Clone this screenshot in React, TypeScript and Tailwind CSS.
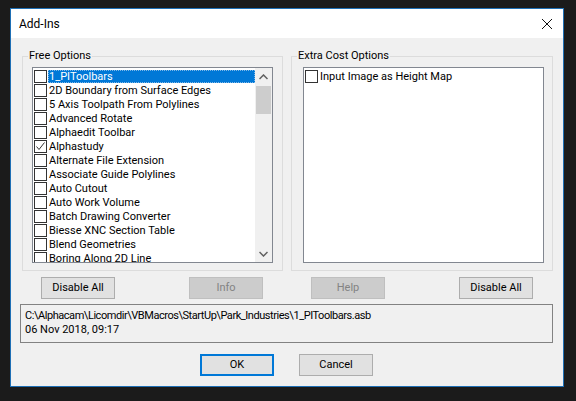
import React from "react";

const freeOptions = [
  "1_PIToolbars",
  "2D Boundary from Surface Edges",
  "5 Axis Toolpath From Polylines",
  "Advanced Rotate",
  "Alphaedit Toolbar",
  "Alphastudy",
  "Alternate File Extension",
  "Associate Guide Polylines",
  "Auto Cutout",
  "Auto Work Volume",
  "Batch Drawing Converter",
  "Biesse XNC Section Table",
  "Blend Geometries",
  "Boring Along 2D Line",
];

function CheckBox({ checked }: { checked?: boolean }) {
  return (
    <div className="w-[13px] h-[13px] shrink-0 border border-[#333333] bg-white flex items-center justify-center">
      {checked && (
        <svg width="11" height="11" viewBox="0 0 11 11">
          <path d="M1.5 5.5 L4 8.5 L9.5 1.5" fill="none" stroke="#333" strokeWidth="1" />
        </svg>
      )}
    </div>
  );
}

function Row({ label, checked, selected }: { label: string; checked?: boolean; selected?: boolean }) {
  return (
    <div className="h-[14px] flex items-center pl-[1px] whitespace-nowrap">
      <CheckBox checked={checked} />
      <span
        className={`ml-[1px] h-[13px] leading-[13px] pl-[1px] flex-1 ${
          selected ? "bg-[#0078d7] text-white outline outline-1 outline-dotted outline-[#7fb8e8] -outline-offset-1" : "text-black"
        }`}
      >
        {label}
      </span>
    </div>
  );
}

function GroupBox({ title, children }: { title: string; children: React.ReactNode }) {
  return (
    <div className="relative border border-[#dcdcdc] h-[215px] pt-[10px]">
      <span className="absolute -top-[8px] left-[5px] px-[1px] bg-[#f0f0f0] leading-[14px] text-black">{title}</span>
      {children}
    </div>
  );
}

function Button({ label, disabled, primary }: { label: string; disabled?: boolean; primary?: boolean }) {
  return (
    <div
      className={`w-[74px] h-[22px] flex items-center justify-center shrink-0 ${
        disabled
          ? "bg-[#cccccc] border border-[#bfbfbf] text-[#838383]"
          : primary
          ? "bg-[#e1e1e1] border-2 border-[#0078d7] text-black"
          : "bg-[#e1e1e1] border border-[#adadad] text-black"
      }`}
    >
      {label}
    </div>
  );
}

export default function App() {
  return (
    <div
      className="w-[576px] h-[401px] bg-[#1b1b1b] pt-[8px] pl-[10px] text-[11px] overflow-hidden"
      style={{ fontFamily: "Roboto, 'Liberation Sans', sans-serif" }}
    >
      <div className="w-[554px] h-[379px] border border-[#1e6fb5] bg-[#f0f0f0] flex flex-col">
        {/* Title bar */}
        <div className="h-[29px] bg-white flex items-center justify-between pl-[8px] pr-[10px] shrink-0">
          <span className="text-[12px] text-black">Add-Ins</span>
          <svg width="12" height="12" viewBox="0 0 12 12">
            <path d="M1 1 L11 11 M11 1 L1 11" stroke="#111" strokeWidth="1" />
          </svg>
        </div>

        {/* Body */}
        <div className="flex-1 pl-[11px] pt-[18px]">
          <div className="flex gap-[8px]">
            <div className="w-[261px]">
              <GroupBox title="Free Options">
                <div className="ml-[9px] w-[241px] h-[196px] border border-[#828790] bg-white flex overflow-hidden">
                  <div className="flex-1 pt-[1px] overflow-hidden">
                    {freeOptions.map((o, i) => (
                      <Row key={o} label={o} checked={o === "Alphastudy"} selected={i === 0} />
                    ))}
                  </div>
                  <div className="w-[17px] bg-[#f0f0f0] flex flex-col items-center shrink-0">
                    <div className="h-[17px] w-full flex items-center justify-center">
                      <svg width="9" height="6" viewBox="0 0 9 6">
                        <path d="M0.5 5 L4.5 1 L8.5 5" fill="none" stroke="#606060" strokeWidth="1.5" />
                      </svg>
                    </div>
                    <div className="mt-[1px] w-[15px] h-[28px] bg-[#cdcdcd]" />
                    <div className="flex-1" />
                    <div className="h-[17px] w-full flex items-center justify-center">
                      <svg width="9" height="6" viewBox="0 0 9 6">
                        <path d="M0.5 1 L4.5 5 L8.5 1" fill="none" stroke="#606060" strokeWidth="1.5" />
                      </svg>
                    </div>
                  </div>
                </div>
              </GroupBox>
            </div>
            <div className="w-[262px]">
              <GroupBox title="Extra Cost Options">
                <div className="ml-[11px] w-[241px] h-[196px] border border-[#828790] bg-white pt-[1px]">
                  <Row label="Input Image as Height Map" />
                </div>
              </GroupBox>
            </div>
          </div>

          {/* Buttons row */}
          <div className="flex mt-[6px] ml-[19px]">
            <Button label="Disable All" />
            <div className="ml-[74px]">
              <Button label="Info" disabled />
            </div>
            <div className="ml-[48px]">
              <Button label="Help" disabled />
            </div>
            <div className="ml-[74px]">
              <Button label="Disable All" />
            </div>
          </div>

          {/* Path info */}
          <div className="mt-[5px] -ml-[2px] w-[533px] h-[39px] border border-[#828282] pl-[4px] pt-[4px] leading-[14px] text-black">
            <div className="tracking-[-0.45px]">C:\Alphacam\Licomdir\VBMacros\StartUp\Park_Industries\1_PIToolbars.asb</div>
            <div>06 Nov 2018, 09:17</div>
          </div>

          {/* OK / Cancel */}
          <div className="flex mt-[11px] ml-[178px] gap-[25px]">
            <Button label="OK" primary />
            <Button label="Cancel" />
          </div>
        </div>
      </div>
    </div>
  );
}
